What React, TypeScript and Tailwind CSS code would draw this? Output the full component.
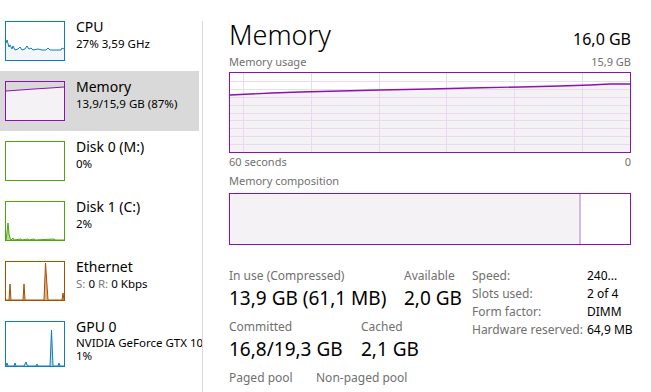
import React from 'react';

const font = { fontFamily: '"Noto Sans", "Open Sans", sans-serif' };

type ThumbProps = {
  border: string;
  fill: string;
  line: string;
  points: string;
  tall?: boolean;
};

const Thumb = ({ border, fill, line, points, tall }: ThumbProps) => {
  const h = tall ? 44 : 38;
  const pts = points.trim();
  return (
    <div className={`shrink-0 w-[60px] border ${tall ? 'h-[46px]' : 'h-[40px]'}`} style={{ borderColor: border }}>
      <svg width="58" height={h} viewBox={`0 0 58 ${h}`} className="block">
        {pts && <polygon points={`0,${h} ${pts} 58,${h}`} fill={fill} />}
        {pts && <polyline points={pts} fill="none" stroke={line} strokeWidth="1" />}
      </svg>
    </div>
  );
};

const sideItems = [
  {
    title: 'CPU',
    sub: ['27%  3,59 GHz'],
    border: '#117dbb',
    fill: '#f1f6fa',
    line: '#117dbb',
    points: '0,21 1,18 3,25 4,23 6,27 7,24 9,28 12,27 14,25 16,28 19,27 21,24 23,27 25,26 27,28 32,27 36,28 40,28 42,26 44,28 52,28 55,28 56,26 58,27',
  },
  {
    title: 'Memory',
    sub: ['13,9/15,9 GB (87%)'],
    border: '#8b12ae',
    fill: '#f4f2f4',
    line: '#8b12ae',
    points: '0,9 14,8 28,7 44,6 58,5',
    selected: true,
  },
  {
    title: 'Disk 0 (M:)',
    sub: ['0%'],
    border: '#4da60c',
    fill: '#eff7e9',
    line: '#4da60c',
    points: '',
  },
  {
    title: 'Disk 1 (C:)',
    sub: ['2%'],
    border: '#4da60c',
    fill: '#b7dc99',
    line: '#4da60c',
    points: '0,38 1,30 2,21 3,32 4,36 5,38 7,36 8,38 15,37 16,38 22,37 23,38 28,37 29,38 48,37 49,38 58,38',
  },
  {
    title: 'Ethernet',
    sub: [],
    eth: true,
    border: '#a74f01',
    fill: '#e0b48c',
    line: '#a74f01',
    points: '0,38 3,38 4,22 5,38 17,38 18,22 19,38 38,38 39.5,1 42,38 56,38 57,31 58,38',
  },
  {
    title: 'GPU 0',
    sub: ['NVIDIA GeForce GTX 1060', '1%'],
    border: '#117dbb',
    fill: '#b8d8ec',
    line: '#117dbb',
    tall: true,
    points: '0,44 1,41 2,44 8,44 9,41 10,44 18,44 19,42 20,40 21,43 23,44 30,44 31,42 32,44 40,44 44,44 45.5,8 47,44 52,44 53,41 54,44 58,44',
  },
];

const gridX = [13, 81, 149, 216, 284, 352];
const gridY = [8, 16, 24, 32, 40, 47, 55, 63, 71];
const usageLine = '0,22 20,21 42,20 70,19 110,18 150,17 200,16 240,15 290,14 330,13 360,12 380,11 400,11';

const MemoryChart = () => (
  <div className="w-[402px] h-[81px] border border-[#8b12ae]">
    <svg width="400" height="79" viewBox="0 0 400 79" className="block">
      <polygon points={`0,79 ${usageLine} 400,79`} fill="#f4f2f4" />
      {gridY.map((y) => (
        <line key={y} x1="0" x2="400" y1={y + 0.5} y2={y + 0.5} stroke="#ebd9ef" strokeWidth="1" />
      ))}
      {gridX.map((x) => (
        <line key={x} x1={x + 0.5} x2={x + 0.5} y1="0" y2="79" stroke="#ebd9ef" strokeWidth="1" />
      ))}
      <polyline points={usageLine} fill="none" stroke="#8b12ae" strokeWidth="1.3" />
    </svg>
  </div>
);

const specs = [
  ['Speed:', '240...'],
  ['Slots used:', '2 of 4'],
  ['Form factor:', 'DIMM'],
  ['Hardware reserved:', '64,9 MB'],
];

export default function App() {
  return (
    <div className="w-[651px] h-[392px] flex bg-white overflow-hidden text-black" style={font}>
      <div className="w-[202px] shrink-0 pt-[11px] overflow-hidden">
        {sideItems.map((item) => (
          <div
            key={item.title}
            className={`flex mr-[3px] pl-[5px] pt-[10px] ${item.tall ? 'h-[70px]' : 'h-[60px]'} ${item.selected ? 'bg-[#d9d9d9]' : ''}`}
          >
            <Thumb border={item.border} fill={item.fill} line={item.line} points={item.points} tall={item.tall} />
            <div className="pl-[11px] -mt-[3px] whitespace-nowrap">
              <div className="text-[14px] leading-[18px]">{item.title}</div>
              {item.eth ? (
                <div className="text-[11.5px] leading-[16px]">
                  <span className="text-[#7a7a7a]">S:</span> 0 <span className="text-[#7a7a7a]">R:</span> 0 Kbps
                </div>
              ) : (
                item.sub.map((s) => (
                  <div key={s} className={`text-[11.5px] ${item.tall ? 'leading-[13px] first:mt-[1px]' : 'leading-[16px]'}`}>
                    {s}
                  </div>
                ))
              )}
            </div>
          </div>
        ))}
      </div>

      <div className="mt-[21px] w-px bg-[#d9d9d9] shrink-0" />

      <div className="pl-[26px] flex flex-col">
        <div className="w-[402px] mt-[19px] flex items-baseline justify-between">
          <div className="text-[27px] leading-[32px] font-light">Memory</div>
          <div className="text-[16px] leading-[20px]">16,0 GB</div>
        </div>

        <div className="w-[402px] mt-[4px] flex justify-between text-[11px] leading-[14px] text-[#707070]">
          <span>Memory usage</span>
          <span>15,9 GB</span>
        </div>
        <div className="mt-[3px]">
          <MemoryChart />
        </div>
        <div className="w-[402px] mt-[2px] flex justify-between text-[11px] leading-[14px] text-[#707070]">
          <span>60 seconds</span>
          <span>0</span>
        </div>

        <div className="mt-[5px] text-[11px] leading-[14px] text-[#707070]">Memory composition</div>
        <div className="mt-[5px] w-[402px] h-[52px] border border-[#8b12ae] flex">
          <div className="w-[351px] h-full bg-[#f4f2f4] border-r-2 border-[#d4b8dd]" />
          <div className="flex-1" />
        </div>

        <div className="mt-[23px] flex">
          <div className="w-[243px] shrink-0">
            <div className="flex">
              <div className="w-[175px]">
                <div className="text-[12px] leading-[16px] text-[#707070]">In use (Compressed)</div>
                <div className="mt-[2px] text-[19px] leading-[24px]">13,9 GB (61,1 MB)</div>
              </div>
              <div>
                <div className="text-[12px] leading-[16px] text-[#707070]">Available</div>
                <div className="mt-[2px] text-[19px] leading-[24px]">2,0 GB</div>
              </div>
            </div>
            <div className="flex mt-[9px]">
              <div className="w-[132px]">
                <div className="text-[12px] leading-[16px] text-[#707070]">Committed</div>
                <div className="mt-[2px] text-[19px] leading-[24px]">16,8/19,3 GB</div>
              </div>
              <div>
                <div className="text-[12px] leading-[16px] text-[#707070]">Cached</div>
                <div className="mt-[2px] text-[19px] leading-[24px]">2,1 GB</div>
              </div>
            </div>
            <div className="flex mt-[9px]">
              <div className="w-[87px] text-[12px] leading-[16px] text-[#707070]">Paged pool</div>
              <div className="text-[12px] leading-[16px] text-[#707070]">Non-paged pool</div>
            </div>
          </div>

          <div className="-mt-[1px]">
            {specs.map(([k, v]) => (
              <div key={k} className="flex text-[12px] leading-[18px] whitespace-nowrap">
                <div className="w-[115px] text-[#707070]">{k}</div>
                <div>{v}</div>
              </div>
            ))}
          </div>
        </div>
      </div>
    </div>
  );
}
